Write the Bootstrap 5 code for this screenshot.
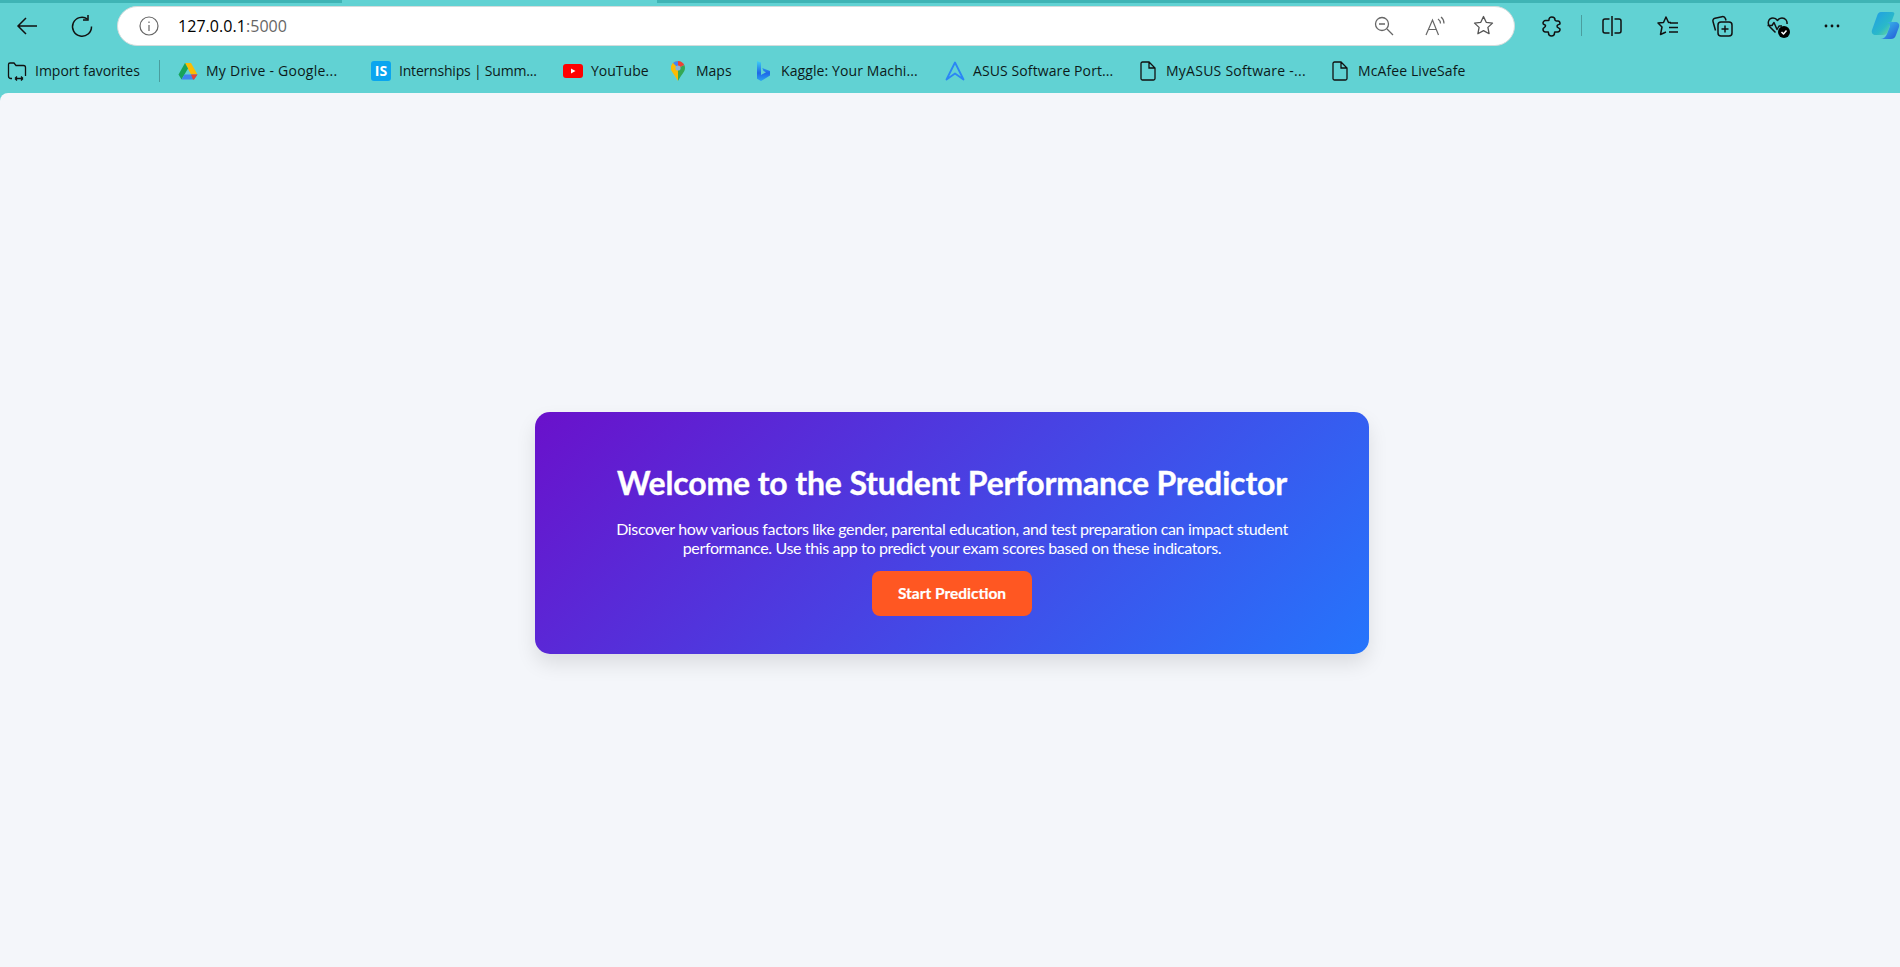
<!DOCTYPE html>
<html lang="en"><head><meta charset="utf-8"><title>Student Performance Predictor</title>
<link href="https://cdn.jsdelivr.net/npm/bootstrap@5.3.0/dist/css/bootstrap.min.css" rel="stylesheet">
<style>
html,body{height:100%}
body{background:#61d2d3;font-family:"Open Sans","Noto Sans",sans-serif;overflow:hidden;color:#0c1a1a}
.shell{height:967px}
.tabline{height:3px;background:linear-gradient(90deg,#3fb4b5 342px,#61d2d3 342px,#61d2d3 657px,#3fb4b5 657px);flex:none}
.toolbar{height:45px;flex:none;padding-left:15px}
.tbtn{width:24px;height:24px;flex:none}
.tbtn svg,.fav svg{display:block}
.reload{margin-left:31px}
.addr{width:1398px;height:40px;margin-left:23px;background:#fff;border:1px solid #d4dcdc;border-radius:20px;padding:0 20px 0 21px;flex:none}
.url{font-size:16px;margin-left:19px;letter-spacing:.05px;color:#000}
.url span{color:#666}
.zoomi{margin-left:auto}
.readi{margin-left:31px}
.stari{margin-left:28px}
.m-ext{margin-left:25px}
.sep{width:1px;height:21px;background:#4a9d9e;margin:0 18px 0 17px;flex:none}
.m-fav{margin-left:32px}
.m-coll{margin-left:30px}
.m-heart{margin-left:32px}
.m-dots{margin-left:30px}
.copi{width:30px;height:30px;flex:none;margin-left:26px}
.bookmarks{height:45px;flex:none;padding-left:7px;font-size:14px}
.fav{width:20px;height:20px;flex:none}
.bitem{white-space:nowrap;gap:8px;flex:none}
.w-import{width:152px}
.bsep{width:1px;height:22px;background:#4a9d9e;margin-right:18px;flex:none}
.w-drive,.w-asus{width:193px}
.w-intern,.w-bing,.w-doc{width:192px}
.w-yt{width:105px}
.w-maps{width:85px}
.w-drive span{letter-spacing:.25px}
.w-intern span{letter-spacing:-.2px}
.w-bing span,.w-asus span,.w-safe span{letter-spacing:.1px}
.w-doc span{letter-spacing:.25px}
.pagearea{flex:1;background:#f4f6fa;border-top-left-radius:8px}
.hero{width:834px;height:242px;margin:5px 0 0 4px;border-radius:15px;border:0;background:linear-gradient(135deg,#6a11cb,#2575fc);box-shadow:0 10px 20px rgba(0,0,0,.1);color:#fff;text-align:center;padding:52px 75px 0;font-family:Lato,"Open Sans",sans-serif}
.hero h1{font-size:32px;font-weight:700;margin:0 0 17px;line-height:38px;letter-spacing:-.15px;-webkit-text-stroke:.35px #fff}
.hero p{font-size:16px;line-height:19.5px;margin:0 0 13px;letter-spacing:-.36px}
.startbtn{background:#ff5722;border:0;border-radius:8px;color:#fff;font-size:15.5px;font-weight:700;width:160px;height:45px;padding:2px 0 0;-webkit-text-stroke:.2px #fff}
.startbtn:hover{background:#ff5722;color:#fff}
</style></head>
<body>
<div class="shell d-flex flex-column">
<div class="tabline"></div>
<div class="toolbar d-flex align-items-center">
 <div class="tbtn"><svg width="24" height="24" viewBox="0 0 24 24" fill="none" stroke="#111" stroke-width="1.500"><path d="M22 12H3M11 4l-8 8 8 8"/></svg></div>
 <div class="tbtn reload"><svg width="24" height="24" viewBox="0 0 24 24" fill="none" stroke="#111" stroke-width="1.500"><path d="M17.500 5A9.500 9.500 0 1 0 21.500 12.500"/><path d="M18 1v5h-5"/></svg></div>
 <div class="addr d-flex align-items-center">
  <svg width="20" height="20" viewBox="0 0 20 20" fill="none" stroke="#666" stroke-width="1.200"><circle cx="10" cy="10" r="9"/><path d="M10 9v6M10 5.500v1.500"/></svg>
  <div class="url">127.0.0.1<span>:5000</span></div>
  <svg class="zoomi" width="20" height="20" viewBox="0 0 20 20" fill="none" stroke="#666" stroke-width="1.300"><circle cx="8" cy="8" r="6.500"/><path d="M5 8h6M13 13l6 6"/></svg>
  <svg class="readi" width="20" height="20" viewBox="0 0 20 20" fill="none" stroke="#666" stroke-width="1.200"><path d="M1 19L7.500 4l6 15M3.500 13.500h8M13 3c1.500 1 2.500 2.500 2.500 4.500M16 1c2 1.500 3 4 3 6.500"/></svg>
  <svg class="stari" width="21" height="21" viewBox="0 0 21 21" fill="none" stroke="#555" stroke-width="1.300"><path d="M10.500 1.500l2.700 5.800 6.300.8-4.600 4.300 1.200 6.300-5.600-3.100-5.600 3.100 1.200-6.300L1.500 8.100l6.300-.8z" stroke-linejoin="round"/></svg>
 </div>
 <div class="tbtn m-ext"><svg width="24" height="24" viewBox="0 0 24 24" fill="none" stroke="#111" stroke-width="1.500" stroke-linejoin="round"><path d="M9 6c-.5-4 6-4 6 0 0 1 1 1 3 1 2 0 2 1.500 2 3-.5 1-2.500 0-3 2-.5 2 3 2 3 3 0 2-1 3-2.500 3-2 0-3-.5-3 1s-1 3-3 3-3-1-3-3c0-1.500-1-1-3-1-1.500 0-2.500-1-2.500-3 0-1.500 3-1.500 2.500-3.500C4.500 10 3 11 3 9c0-1 1-2.500 2.500-2.500C7 6.500 9 7 9 6z"/></svg></div>
 <div class="sep"></div>
 <div class="tbtn"><svg width="24" height="24" viewBox="0 0 24 24" fill="none" stroke="#111" stroke-width="1.500"><path d="M12 2v20M9.500 5H5a2 2 0 0 0-2 2v10a2 2 0 0 0 2 2h4.500M14.500 5H19a2 2 0 0 1 2 2v10a2 2 0 0 1-2 2h-4.500"/></svg></div>
 <div class="tbtn m-fav"><svg width="24" height="24" viewBox="0 0 24 24" fill="none" stroke="#111" stroke-width="1.500" stroke-linejoin="round"><path d="M15 8.500h-2.500L10 3 7.500 8.500 2 9l4 4-1.500 7.500L10 18"/><path d="M14 9h8M13 13.500h9M13 18h9"/></svg></div>
 <div class="tbtn m-coll"><svg width="24" height="24" viewBox="0 0 24 24" fill="none" stroke="#111" stroke-width="1.500"><path d="M5.500 16.500L3 7.500c-.4-1.500.5-3 2-3.300l7-1.500c1.500-.3 3 .5 3.500 2L16 6.500"/><rect x="8" y="8" width="14" height="14" rx="3"/><path d="M15 11.500v7M11.500 15h7"/></svg></div>
 <div class="tbtn m-heart"><svg width="24" height="24" viewBox="0 0 24 24" fill="none" stroke="#111" stroke-width="1.500" stroke-linejoin="round"><path d="M9.500 18.500L4 13C1 10 2 4 7 4c2 0 3.500 1 4.500 2.500C12.500 5 14 4 16 4c3.500 0 5.500 3 5 6"/><path d="M1.500 11.500h4.500l2-3 3 7 2-3.500h3"/><circle cx="18" cy="18" r="6" fill="#000" stroke="none"/><path d="M15.500 18l2 2 3-3.500" stroke="#fff"/></svg></div>
 <div class="tbtn m-dots"><svg width="24" height="24" viewBox="0 0 24 24" fill="#111"><circle cx="6" cy="12" r="1.400"/><circle cx="12" cy="12" r="1.400"/><circle cx="18" cy="12" r="1.400"/></svg></div>
 <div class="copi"><svg width="30" height="30" viewBox="0 0 30 30"><defs><linearGradient id="cp1" x1="0" y1="0" x2="1" y2="1"><stop offset="0" stop-color="#1f9be8"/><stop offset=".6" stop-color="#2ab9c9"/><stop offset="1" stop-color="#7fe08a"/></linearGradient><linearGradient id="cp2" x1="0" y1="0" x2="1" y2="1"><stop offset="0" stop-color="#3cc8ec"/><stop offset="1" stop-color="#2456d8"/></linearGradient></defs><path d="M11 1h11c2 0 3 1 2 3L18 20c-1 3-3 4-5 4H6c-3 0-5-2-4-5L7 5c1-3 2-4 4-4z" fill="url(#cp1)"/><path d="M17 11h8c3 0 5 2 4 5l-3 8c-1 3-3 4-5 4H10c3 0 6-2 7-5l3-8c.3-1-1-4-3-4z" fill="url(#cp2)"/></svg></div>
</div>
<div class="bookmarks d-flex align-items-center">
 <div class="bitem w-import d-flex align-items-center"><svg class="fav" viewBox="0 0 20 20" fill="none" stroke="#111" stroke-width="1.300"><path d="M1.500 15V3.500a1.500 1.500 0 0 1 1.500-1.500h4l2 2.500h7.500a2 2 0 0 1 2 2V15M1.500 15a2.500 2.500 0 0 0 2.500 2.500h1M8 17.500h8M8 17.500l2-2M8 17.500l2 2M16 17.500l-2-2M16 17.500l-2 2"/></svg><span>Import favorites</span></div>
 <div class="bsep"></div>
 <div class="bitem w-drive d-flex align-items-center"><svg class="fav" viewBox="0 0 20 20"><path d="M7 2h6l6.500 11.500h-6.500z" fill="#fbbc04"/><path d="M7 2L.5 13.500l3 5L10 7.500z" fill="#17a35b"/><path d="M3.500 18.500H16l3.500-5H6.500z" fill="#3f84f0"/><path d="M13 13.500h6.500L16 18.500h-1z" fill="#ea4335"/></svg><span>My Drive - Google...</span></div>
 <div class="bitem w-intern d-flex align-items-center"><svg class="fav" viewBox="0 0 20 20"><rect width="20" height="20" rx="3" fill="#0aa5ef"/><text x="10" y="15" fill="#fff" font-size="14" font-weight="700" text-anchor="middle" font-family="Open Sans">IS</text></svg><span>Internships | Summ...</span></div>
 <div class="bitem w-yt d-flex align-items-center"><svg class="fav" viewBox="0 0 20 20"><rect y="3" width="20" height="14" rx="3" fill="#f00"/><path d="M8 7.500l4.500 2.500L8 12.500z" fill="#fff"/></svg><span>YouTube</span></div>
 <div class="bitem w-maps d-flex align-items-center"><svg class="fav" viewBox="0 0 20 20"><path d="M10 0a7 7 0 0 0-7 7c0 4 4 7 7 13z" fill="#fbbc04"/><path d="M10 20c3-6 7-9 7-13 0-1-.2-2-.7-3L10 7z" fill="#34a853"/><path d="M5 2l5 5-6.500 2.500C3 8.500 3 7.800 3 7c0-2 1-4 2-5z" fill="#fbbc04"/><path d="M5 2c1.300-1.300 3-2 5-2v7z" fill="#4285f4"/><path d="M10 0c3 0 5.300 1.800 6.300 4L10 7z" fill="#ea4335"/><circle cx="10" cy="7" r="2.600" fill="#8ab4d8"/></svg><span>Maps</span></div>
 <div class="bitem w-bing d-flex align-items-center"><svg class="fav" viewBox="0 0 20 20"><defs><linearGradient id="bg1" x1="0" y1="0" x2="0" y2="1"><stop offset="0" stop-color="#3fd0f5"/><stop offset=".6" stop-color="#1e66e8"/><stop offset="1" stop-color="#2aa5f2"/></linearGradient></defs><path d="M4 0l4 1.500v12.500l5-2.800-2.500-1.200L9.200 7l7.800 3v4.500L8 20l-4-2.200z" fill="url(#bg1)"/></svg><span>Kaggle: Your Machi...</span></div>
 <div class="bitem w-asus d-flex align-items-center"><svg class="fav" viewBox="0 0 20 20" fill="none" stroke="#2b86f5" stroke-width="1.800" stroke-linejoin="round"><path d="M1.500 18.500L10 1.500l8.500 17L10 12.500z"/></svg><span>ASUS Software Port...</span></div>
 <div class="bitem w-doc d-flex align-items-center"><svg class="fav" viewBox="0 0 20 20" fill="none" stroke="#111" stroke-width="1.300"><path d="M3 2.500A1.500 1.500 0 0 1 4.500 1H11l6 6v10.500a1.500 1.500 0 0 1-1.500 1.500h-11A1.500 1.500 0 0 1 3 17.500zM11 1v6h6"/></svg><span>MyASUS Software -...</span></div>
 <div class="bitem w-safe d-flex align-items-center"><svg class="fav" viewBox="0 0 20 20" fill="none" stroke="#111" stroke-width="1.300"><path d="M3 2.500A1.500 1.500 0 0 1 4.500 1H11l6 6v10.500a1.500 1.500 0 0 1-1.500 1.500h-11A1.500 1.500 0 0 1 3 17.500zM11 1v6h6"/></svg><span>McAfee LiveSafe</span></div>
</div>
<main class="pagearea d-flex align-items-center justify-content-center">
 <div class="card hero d-block">
  <h1>Welcome to the Student Performance Predictor</h1>
  <p>Discover how various factors like gender, parental education, and test preparation can impact student performance. Use this app to predict your exam scores based on these indicators.</p>
  <div><button class="btn startbtn" type="button">Start Prediction</button></div>
 </div>
</main>
</div>
<script src="https://cdn.jsdelivr.net/npm/bootstrap@5.3.0/dist/js/bootstrap.bundle.min.js"></script>
</body></html>
